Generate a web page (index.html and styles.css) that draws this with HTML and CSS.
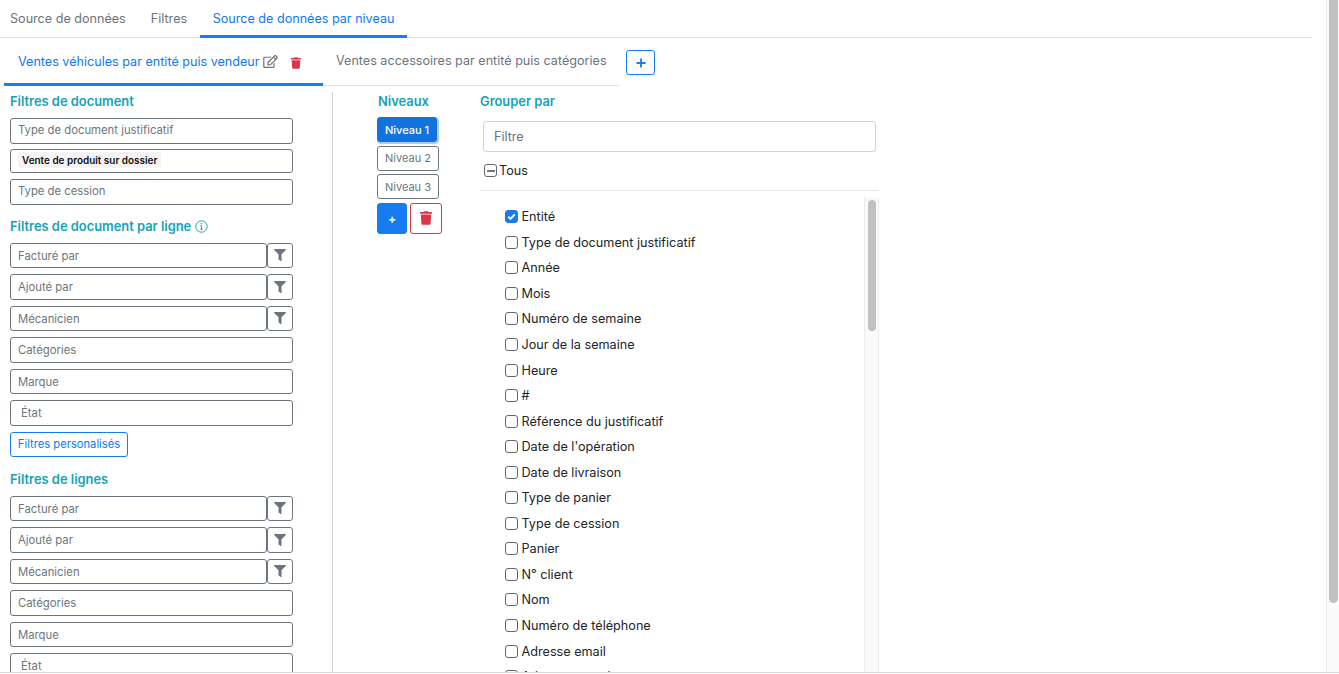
FILE: index.html
```html
<!DOCTYPE html>
<html lang="fr">
<head>
<meta charset="utf-8">
<title>Source de données par niveau</title>
<link rel="stylesheet" href="styles.css">
</head>
<body>
<div class="app">
  <main class="content">
    <nav class="tabs">
      <a class="tab">Source de données</a>
      <a class="tab">Filtres</a>
      <a class="tab active">Source de données par niveau</a>
    </nav>
    <div class="subtabs-row">
      <div class="subtabs">
        <a class="subtab active">Ventes véhicules par entité puis vendeur
          <svg class="icon-edit" viewBox="0 0 576 512"><path d="M402.3 344.9l32-32c5-5 13.7-1.5 13.7 5.7V464c0 26.5-21.5 48-48 48H48c-26.5 0-48-21.5-48-48V112c0-26.5 21.5-48 48-48h273.5c7.1 0 10.7 8.6 5.7 13.7l-32 32c-1.5 1.5-3.5 2.3-5.7 2.3H48v352h352V350.5c0-2.1.8-4.1 2.3-5.6zm156.6-201.8L296.3 405.7l-90.4 10c-26.2 2.9-48.5-19.2-45.6-45.6l10-90.4L432.9 17.1c22.9-22.9 59.9-22.9 82.7 0l43.2 43.2c22.9 22.9 22.9 60 .1 82.8zM460.1 174L402 115.9 216.2 301.8l-7.3 65.3 65.3-7.3L460.1 174zm64.8-79.7l-43.2-43.2c-4.1-4.1-10.8-4.1-14.8 0L436 82l58.1 58.1 30.9-30.9c4-4.2 4-10.8-.1-14.9z"/></svg>
          <svg class="icon-trash-sm" viewBox="0 0 448 512"><path d="M432 32H312l-9.4-18.7A24 24 0 0 0 281.1 0H166.8a23.72 23.72 0 0 0-21.4 13.3L136 32H16A16 16 0 0 0 0 48v32a16 16 0 0 0 16 16h416a16 16 0 0 0 16-16V48a16 16 0 0 0-16-16zM53.2 467a48 48 0 0 0 47.9 45h245.8a48 48 0 0 0 47.9-45L416 128H32z"/></svg>
        </a>
        <a class="subtab">Ventes accessoires par entité puis catégories</a>
      </div>
      <button class="add-tab">
        <svg viewBox="0 0 12 12"><path d="M6 1.5v9M1.5 6h9"/></svg>
      </button>
    </div>
    <div class="columns">
      <section class="filters">
        <h3 class="heading heading-first">Filtres de document</h3>
        <div class="field field-first">Type de document justificatif</div>
        <div class="field field-tag"><span class="tag">Vente de produit sur dossier</span></div>
        <div class="field">Type de cession</div>

        <h3 class="heading heading-next">Filtres de document par ligne
          <svg class="icon-info" viewBox="0 0 16 16"><circle cx="8" cy="8" r="7" /><path d="M8 7v4.4M6.6 7.2H8M6.6 11.6h2.9"/><circle class="dot" cx="7.9" cy="4.6" r="1"/></svg>
        </h3>
        <div class="block">
        <div class="field-group"><div class="field">Facturé par</div><button class="filter-btn"><svg viewBox="0 0 512 512"><path d="M487.976 0H24.028C2.71 0-8.047 25.866 7.058 40.971L192 225.941V432c0 7.831 3.821 15.17 10.237 19.662l80 55.98C298.02 518.69 320 507.493 320 487.98V225.941l184.947-184.97C520.021 25.896 509.338 0 487.976 0z"/></svg></button></div>
        <div class="field-group"><div class="field">Ajouté par</div><button class="filter-btn"><svg viewBox="0 0 512 512"><path d="M487.976 0H24.028C2.71 0-8.047 25.866 7.058 40.971L192 225.941V432c0 7.831 3.821 15.17 10.237 19.662l80 55.98C298.02 518.69 320 507.493 320 487.98V225.941l184.947-184.97C520.021 25.896 509.338 0 487.976 0z"/></svg></button></div>
        <div class="field-group"><div class="field">Mécanicien</div><button class="filter-btn"><svg viewBox="0 0 512 512"><path d="M487.976 0H24.028C2.71 0-8.047 25.866 7.058 40.971L192 225.941V432c0 7.831 3.821 15.17 10.237 19.662l80 55.98C298.02 518.69 320 507.493 320 487.98V225.941l184.947-184.97C520.021 25.896 509.338 0 487.976 0z"/></svg></button></div>
        <div class="field">Catégories</div>
        <div class="field">Marque</div>
        <div class="field field-indent">État</div>
        </div>
        <button class="custom-btn">Filtres personalisés</button>

        <h3 class="heading heading-next heading-lines">Filtres de lignes</h3>
        <div class="block">
        <div class="field-group"><div class="field">Facturé par</div><button class="filter-btn"><svg viewBox="0 0 512 512"><path d="M487.976 0H24.028C2.71 0-8.047 25.866 7.058 40.971L192 225.941V432c0 7.831 3.821 15.17 10.237 19.662l80 55.98C298.02 518.69 320 507.493 320 487.98V225.941l184.947-184.97C520.021 25.896 509.338 0 487.976 0z"/></svg></button></div>
        <div class="field-group"><div class="field">Ajouté par</div><button class="filter-btn"><svg viewBox="0 0 512 512"><path d="M487.976 0H24.028C2.71 0-8.047 25.866 7.058 40.971L192 225.941V432c0 7.831 3.821 15.17 10.237 19.662l80 55.98C298.02 518.69 320 507.493 320 487.98V225.941l184.947-184.97C520.021 25.896 509.338 0 487.976 0z"/></svg></button></div>
        <div class="field-group"><div class="field">Mécanicien</div><button class="filter-btn"><svg viewBox="0 0 512 512"><path d="M487.976 0H24.028C2.71 0-8.047 25.866 7.058 40.971L192 225.941V432c0 7.831 3.821 15.17 10.237 19.662l80 55.98C298.02 518.69 320 507.493 320 487.98V225.941l184.947-184.97C520.021 25.896 509.338 0 487.976 0z"/></svg></button></div>
        <div class="field">Catégories</div>
        <div class="field">Marque</div>
        <div class="field field-indent">État</div>
        </div>
      </section>

      <section class="levels">
        <h3 class="heading">Niveaux</h3>
        <button class="level selected">Niveau 1</button>
        <button class="level">Niveau 2</button>
        <button class="level">Niveau 3</button>
        <div class="level-actions">
          <button class="level-add">+</button>
          <button class="level-del"><svg viewBox="0 0 448 512"><path d="M432 32H312l-9.4-18.7A24 24 0 0 0 281.1 0H166.8a23.72 23.72 0 0 0-21.4 13.3L136 32H16A16 16 0 0 0 0 48v32a16 16 0 0 0 16 16h416a16 16 0 0 0 16-16V48a16 16 0 0 0-16-16zM53.2 467a48 48 0 0 0 47.9 45h245.8a48 48 0 0 0 47.9-45L416 128H32z"/></svg></button>
        </div>
      </section>

      <section class="group">
        <h3 class="heading">Grouper par</h3>
        <input class="search" type="text" placeholder="Filtre">
        <div class="all-row"><span class="box box-minus"><i></i></span>Tous</div>
        <div class="list-wrap">
          <ul class="list">
            <li><span class="box box-checked"><svg viewBox="0 0 12 12"><path d="M2.5 6.2l2.4 2.4 4.6-5"/></svg></span>Entité</li>
            <li><span class="box"></span>Type de document justificatif</li>
            <li><span class="box"></span>Année</li>
            <li><span class="box"></span>Mois</li>
            <li><span class="box"></span>Numéro de semaine</li>
            <li><span class="box"></span>Jour de la semaine</li>
            <li><span class="box"></span>Heure</li>
            <li><span class="box"></span>#</li>
            <li><span class="box"></span>Référence du justificatif</li>
            <li><span class="box"></span>Date de l'opération</li>
            <li><span class="box"></span>Date de livraison</li>
            <li><span class="box"></span>Type de panier</li>
            <li><span class="box"></span>Type de cession</li>
            <li><span class="box"></span>Panier</li>
            <li><span class="box"></span>N° client</li>
            <li><span class="box"></span>Nom</li>
            <li><span class="box"></span>Numéro de téléphone</li>
            <li><span class="box"></span>Adresse email</li>
            <li><span class="box"></span>Adresse postale</li>
          </ul>
          <div class="list-scroll"><div class="list-thumb"></div></div>
        </div>
      </section>
    </div>
  </main>
  <div class="page-scroll"><div class="page-thumb"></div></div>
</div>
</body>
</html>
```
FILE: styles.css
```css
* { box-sizing: border-box; }
html, body { margin: 0; padding: 0; background: #fff; overflow: hidden; }
body { font-family: Inter, "Liberation Sans", sans-serif; font-size: 12px; color: #212529; height: 674px; }
button { font-family: inherit; cursor: pointer; padding: 0; }

.app { display: flex; height: 673px; overflow: hidden; border-bottom: 1px solid #d5dbe0; }
.content { width: 1312px; flex: none; }

.tabs { display: flex; height: 38px; border-bottom: 1px solid #dee2e6; }
.tab { height: 38px; padding: 0 12.5px; line-height: 38px; font-size: 12.6px; color: #6c757d; white-space: nowrap; }
.tab:first-child { padding-left: 10px; }
.tab.active { color: #0d7bf2; border-bottom: 3px solid #167cf0; padding: 0 13px; }

.subtabs-row { display: flex; align-items: flex-start; height: 48px; padding-left: 4px; }
.subtabs { display: flex; flex: none; width: 615px; height: 48px; border-bottom: 1px solid #dee2e6; }
.subtab { display: flex; flex: none; align-items: center; height: 48px; padding: 0 13px 4px 13px; font-size: 12.6px; color: #6c757d; white-space: nowrap; }
.subtab.active { width: 319px; padding: 2px 13px 0 14px; color: #0d7bf2; border-bottom: 3px solid #167cf0; }
.icon-edit { width: 15px; height: 13px; margin-left: 3px; fill: #6c757d; }
.icon-trash-sm { width: 10px; height: 12px; margin-left: 13px; margin-top: 3px; fill: #dc3545; }
.add-tab { width: 29px; height: 25px; margin: 12px 0 0 7px; display: flex; align-items: center; justify-content: center; background: #fff; border: 1px solid #167cf0; border-radius: 3px; }
.add-tab svg { width: 12px; height: 12px; fill: none; stroke: #167cf0; stroke-width: 1.8; }

.columns { display: flex; align-items: flex-start; }
.heading { margin: 0; font-size: 12.9px; line-height: 16px; font-weight: 600; color: #17a2b8; }
.heading-first { margin-bottom: 8px; }
.heading-next { margin-top: 14px; margin-bottom: 8px; display: flex; align-items: center; }
.heading-lines { margin-top: 15px; margin-bottom: 8px; }

.filters { width: 333px; height: 586px; margin-top: 6px; padding: 2px 39px 0 10px; border-right: 1px solid #ced4da; overflow: hidden; flex: none; }
.field { height: 25.5px; line-height: 23.5px; padding: 0 7px; margin-bottom: 6px; border: 1px solid #6c757d; border-radius: 3px; font-size: 11.3px; color: #6c757d; background: #fff; white-space: nowrap; }
.block .field { line-height: 24.2px; }
.field-first { margin-bottom: 5px; }
.field-tag { height: 24.5px; line-height: 20px; padding: 0; }
.tag { display: inline-block; height: 16px; line-height: 16px; margin: 2px 0 0 7px; padding: 0 4px; border-radius: 3px; background: #f4f4f5; font-size: 9.95px; font-weight: 600; color: #111; vertical-align: top; }
.block .field-indent { padding-left: 10px; }
.field-group { display: flex; margin-bottom: 6px; }
.field-group .field { flex: 1; margin: 0; }
.filter-btn { width: 26px; height: 25.5px; flex: none; display: flex; align-items: center; justify-content: center; background: #fff; border: 1px solid #6c757d; border-radius: 3px; }
.filter-btn svg { width: 12px; height: 12px; fill: #6c757d; }
.icon-info { width: 13px; height: 13px; margin-left: 4px; fill: none; stroke: #17a2b8; stroke-width: 1.2; }
.icon-info .dot { fill: #17a2b8; stroke: none; }
.custom-btn { display: block; height: 25px; width: 118px; background: #fff; border: 1px solid #167cf0; border-radius: 3px; color: #0d7bf2; font-size: 11.2px; }

.levels { width: 147px; margin-top: 8px; padding-left: 44px; flex: none; }
.levels .heading { margin-left: 1px; margin-bottom: 7px; }
.level { display: block; width: 62px; height: 25px; margin-bottom: 3.5px; background: #fff; border: 1px solid #6c757d; border-radius: 3px; color: #6c757d; font-size: 11px; }
.level.selected { width: 60px; background: #1273de; border-color: #1273de; color: #fff; font-weight: 500; box-shadow: 1px 1px 0 1px #a9cdf8; }
.level-actions { display: flex; gap: 3px; }
.level-add { width: 30px; height: 31px; background: #167cf0; border: 1px solid #167cf0; border-radius: 3px; color: #fff; font-size: 12px; font-weight: 700; }
.level-del { width: 32px; height: 31px; display: flex; align-items: center; justify-content: center; background: #fff; border: 1px solid #dc3545; border-radius: 3px; }
.level-del svg { width: 12px; height: 14px; fill: #dc3545; }

.group { width: 399px; margin-top: 8px; flex: none; }
.search { display: block; width: 393px; height: 31px; margin: 11px 0 0 3px; padding: 0 10px; border: 1px solid #ced4da; border-radius: 3px; font: 12.6px Inter, "Liberation Sans", sans-serif; color: #495057; outline: none; }
.search::placeholder { color: #6c757d; }
.all-row { display: flex; align-items: center; height: 39px; padding: 0 0 1px 4px; border-bottom: 1px solid #e4e6e8; font-size: 12.6px; }
.box { width: 13px; height: 13px; flex: none; margin-right: 3.5px; border: 1px solid #666; border-radius: 3px; background: #fff; display: inline-flex; align-items: center; justify-content: center; }
.all-row .box { margin-right: 2px; }
.box-minus i { display: block; width: 8px; height: 2px; background: #777; }
.box-checked { background: #1a7bf0; border-color: #1a7bf0; }
.box-checked svg { width: 11px; height: 11px; fill: none; stroke: #fff; stroke-width: 2; }
.list-wrap { display: flex; height: 480px; margin-top: 6px; border-right: 1px solid #ececec; }
.list { flex: 1; margin: 0; padding: 7px 0 0 25px; list-style: none; overflow: hidden; }
.list li { display: flex; align-items: center; height: 25.56px; font-size: 12.65px; color: #212529; white-space: nowrap; }
.list-scroll { width: 14px; flex: none; padding: 3px 0 0 3px; border-left: 1px solid #ececec; background: #fafafa; }
.list-thumb { width: 8px; height: 131px; border-radius: 4px; background: #c1c1c1; }

.page-scroll { flex: none; width: 13px; margin-left: 14px; padding-left: 2px; height: 673px; border-left: 1px solid #ececec; background: #fafafa; }
.page-thumb { width: 9px; height: 603px; border-radius: 0 0 5px 5px; background: #c1c1c1; }
```
